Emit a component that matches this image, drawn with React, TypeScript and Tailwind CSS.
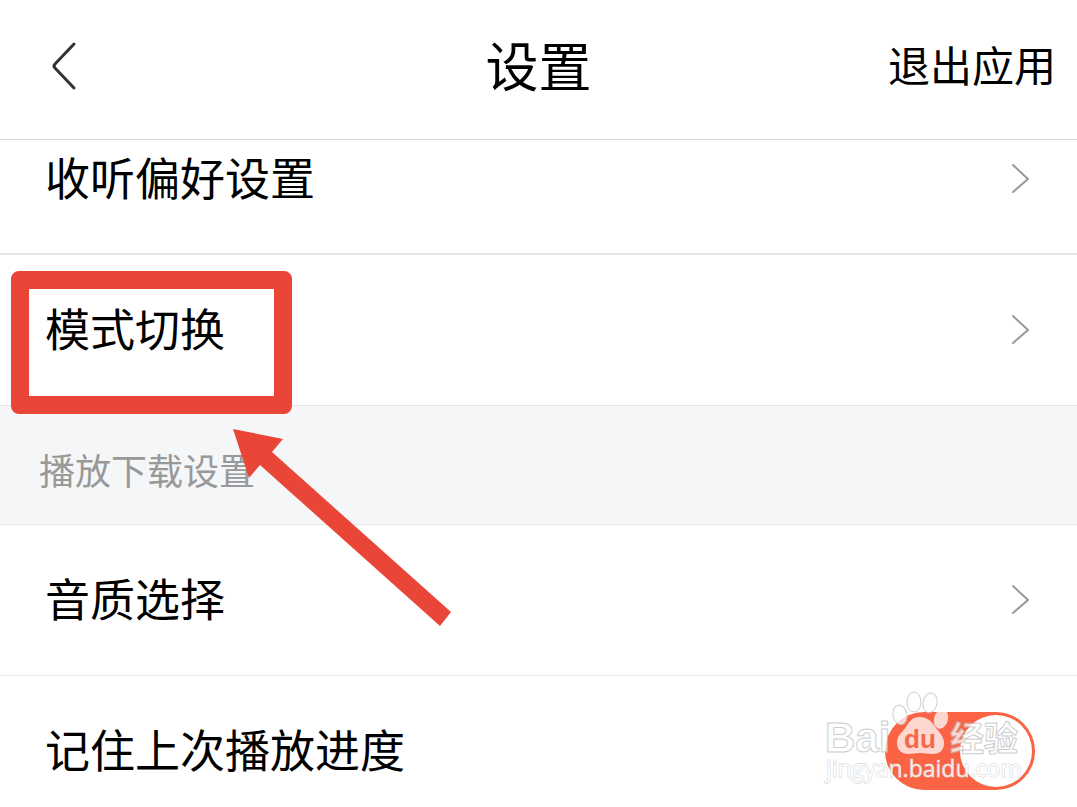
import React from 'react';

interface SettingRowProps {
  label: string;
  className?: string;
  children?: React.ReactNode;
}

const ChevronRight = () => (
  <svg className="h-8 w-5" viewBox="0 0 20 32" fill="none" stroke="#999999" strokeWidth="2" strokeLinecap="round" strokeLinejoin="round">
    <path d="M3 2l15 14L3 29" />
  </svg>
);

const SettingRow: React.FC<SettingRowProps> = ({ label, className = 'h-[151px] border-b', children }) => (
  <li className={`relative border-[#e4e6e8] ${className}`}>
    <button type="button" className="flex h-full w-full items-center justify-between pr-[47px] pl-[45px] text-left">
      <span className="pb-1">{label}</span>
      <ChevronRight />
    </button>
    {children}
  </li>
);

// Red box around the row plus the arrow pointing at it
const Highlight = () => (
  <div className="pointer-events-none" aria-hidden="true">
    <div className="absolute top-4 left-[11px] z-10 h-[143px] w-[281px] rounded-lg border-[18px] border-[#e94638]"></div>
    <svg className="absolute top-[174px] left-[233px] z-10 h-[197px] w-[218px]" viewBox="0 0 218 197" fill="#e94638">
      <path d="M0 0L50 10L39 23L218 183L207 197L27 36L16 49Z" />
    </svg>
  </div>
);

const Watermark = () => (
  <svg
    className="pointer-events-none absolute top-3 right-[52px] h-[110px] w-[205px]"
    viewBox="0 0 205 110"
    fill="#ffffff"
    stroke="#bdbdbd"
    strokeWidth="1"
    aria-hidden="true"
  >
    <g opacity="0.75">
      <text x="5" y="64" fontSize="42" fontWeight="700" fontFamily="Liberation Sans, sans-serif">Bai</text>
      <ellipse cx="80" cy="27" rx="7" ry="10" transform="rotate(-12 80 27)" />
      <ellipse cx="94" cy="14" rx="7" ry="10" />
      <ellipse cx="110" cy="15" rx="7" ry="10" transform="rotate(12 110 15)" />
      <ellipse cx="121" cy="31" rx="7" ry="10" transform="rotate(15 121 31)" stroke="none" />
      <path
        d="M100 29c-8 0-11 5-14 10-4 6-9 8-9 16 0 7 5 11 11 11 5 0 8-1 12-1s8 1 13 1c7 0 11-4 11-11 0-6-4-10-8-15-4-6-8-11-16-11Z"
        stroke="none"
      />
      <text x="130" y="63" fontSize="34" fontWeight="700" fontFamily="Noto Sans CJK SC, sans-serif">经验</text>
    </g>
    <text x="84" y="60" fontSize="26" fontWeight="700" fontFamily="Liberation Sans, sans-serif" fill="#f4684c" stroke="none">du</text>
    <text x="6" y="89" fontSize="23" fontFamily="Open Sans, sans-serif" opacity="0.85" stroke="#c8c8c8" paintOrder="stroke">
      jingyan.baidu.com
    </text>
  </svg>
);

export default function App() {
  return (
    <div className="flex h-screen flex-col overflow-hidden bg-white font-['Noto_Sans_CJK_SC',sans-serif] text-black">
      <header className="grid h-[140px] shrink-0 grid-cols-[1fr_auto_1fr] items-center border-b border-[#d4d6d8] pb-3">
        <button type="button" aria-label="返回" className="justify-self-start pt-1 pl-[50px]">
          <svg className="h-[50px] w-7" viewBox="0 0 28 50" fill="none" stroke="#333333" strokeWidth="3" strokeLinecap="round" strokeLinejoin="round">
            <path d="M24 3L5 23Q3 25 5 27L24 47" />
          </svg>
        </button>
        <h1 className="text-[53px] leading-[64px]">设置</h1>
        <button type="button" className="justify-self-end pr-[21px] text-[42px] leading-[64px]">退出应用</button>
      </header>

      <main className="min-h-0 flex-1 overflow-hidden text-[45px] leading-[64px]">
        <ul>
          <SettingRow label="收听偏好设置" className="h-[115px] border-b-2 pb-9" />
          <SettingRow label="模式切换">
            <Highlight />
          </SettingRow>
        </ul>

        <h2 className="flex h-[119px] items-center border-b border-[#e4e6e8] bg-[#f5f6f8] pt-2 pl-[39px] text-[36px] text-[#999999]">
          播放下载设置
        </h2>

        <ul>
          <SettingRow label="音质选择" />
          <li className="relative">
            <label className="flex h-[150px] items-center justify-between pr-[42px] pl-[45px]">
              <span className="pb-1">记住上次播放进度</span>
              <input
                type="checkbox"
                role="switch"
                defaultChecked
                className="flex h-[78px] w-[150px] appearance-none items-center justify-end rounded-full bg-[#fb6345] p-[3px] before:size-[72px] before:rounded-full before:bg-white before:content-['']"
              />
            </label>
            <Watermark />
          </li>
        </ul>
      </main>
    </div>
  );
}
